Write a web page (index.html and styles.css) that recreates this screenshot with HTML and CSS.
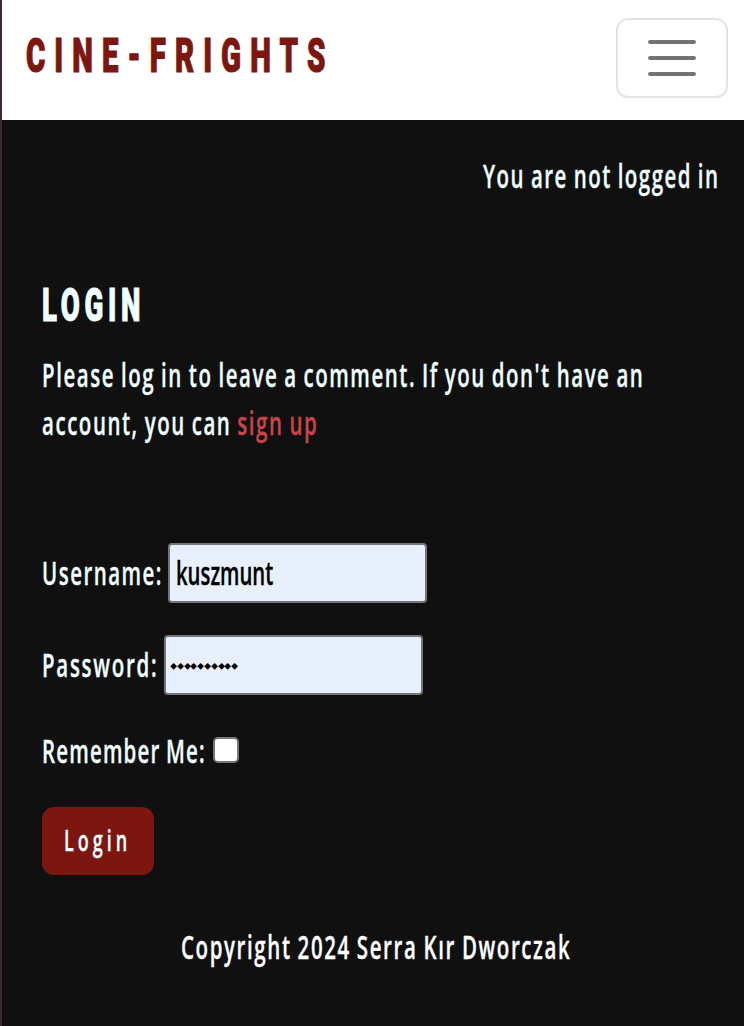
FILE: index.html
```
<!DOCTYPE html>
<html lang="en">
<head>
<meta charset="utf-8">
<title>Cine-Frights</title>
<link rel="stylesheet" href="styles.css">
</head>
<body>
<header class="navbar">
  <a class="brand" href="#"><span class="narrow">CINE-FRIGHTS</span></a>
  <button class="toggler" aria-label="Toggle navigation">
    <svg width="60" height="60" viewBox="0 0 30 30"><path d="M4 7h22M4 15h22M4 23h22" fill="none" stroke="#737373" stroke-width="2" stroke-linecap="round" stroke-miterlimit="10"/></svg>
  </button>
</header>
<p class="status"><span class="narrow">You are not logged in</span></p>
<main class="content">
  <h1 class="title"><span class="narrow">LOGIN</span></h1>
  <p class="intro"><span class="line lead"><span class="narrow">Please log in to leave a comment. If you don't have an</span></span><span class="line"><span class="narrow">account, you can <a class="signup" href="#">sign up</a></span></span></p>
  <form class="form">
    <div class="row"><label class="label user-label"><span class="narrow">Username:</span></label><div class="field"><span class="narrow">kuszmunt</span></div></div>
    <div class="row"><label class="label pass-label"><span class="narrow">Password:</span></label><div class="field dots"><span>⬩⬩⬩⬩⬩⬩⬩⬩⬩⬩</span></div></div>
    <div class="remember"><label class="label remember-label"><span class="narrow">Remember Me:</span></label><span class="check"></span></div>
    <button class="submit" type="button"><span class="narrow">Login</span></button>
  </form>
</main>
<footer class="footer"><span class="narrow">Copyright 2024 Serra Kır Dworczak</span></footer>
</body>
</html>
```
FILE: styles.css
```
* { box-sizing: border-box; }
body {
  margin: 0;
  height: 1026px;
  overflow: hidden;
  border-left: 2px solid #3d2c2d;
  background: #101010;
  color: azure;
  font: 600 33px/48px "Open Sans", sans-serif;
}
p, h1 { margin: 0; }
a { color: inherit; text-decoration: none; }
.narrow {
  display: inline-block;
  white-space: nowrap;
  transform: scaleX(.62);
  transform-origin: left center;
  letter-spacing: 2.4px;
  word-spacing: -1.5px;
  -webkit-text-stroke: .35px currentColor;
}
.navbar {
  height: 120px;
  padding: 18px 16px 0 24px;
  display: flex;
  justify-content: space-between;
  background: #fff;
}
.brand {
  width: 310px;
  padding-top: 14px;
  color: #7b1710;
  font-family: Roboto, sans-serif;
  font-size: 49px;
  font-weight: 900;
}
.brand .narrow { transform: scaleX(.6); letter-spacing: 15.1px; -webkit-text-stroke: 1.2px #7b1710; }
.toggler {
  width: 112px;
  height: 80px;
  padding: 8px 24px;
  border: 2px solid #e4e4e4;
  border-radius: 12px;
  background: #fff;
}
.toggler svg { display: block; }
.status { height: 80px; padding: 32px 0 0 481px; overflow: hidden; }
.content { padding: 80px 0 0 40px; }
.title { height: 71px; line-height: 50px; font-family: Roboto, sans-serif; font-size: 46px; font-weight: 900; }
.title .narrow { transform: scaleX(.6); letter-spacing: 7.8px; -webkit-text-stroke: 1px azure; }
.line { display: block; height: 48px; overflow: hidden; }
.lead .narrow { letter-spacing: 2.5px; }
.line .narrow { letter-spacing: 2.5px; }
.signup { color: #cb444a; }
.form { padding-top: 96px; }
.row { display: flex; height: 60px; margin-bottom: 32px; align-items: center; }
.label { display: block; white-space: nowrap; }
.user-label { width: 126px; }
.pass-label { width: 122px; }
.pass-label .narrow { letter-spacing: 2.8px; }
.remember-label { width: 171px; }
.remember-label .narrow { letter-spacing: 1.9px; }
.field {
  width: 259px;
  height: 60px;
  padding: 4px 6px;
  border: 2px solid #767676;
  border-radius: 4px;
  background: #e8f0fe;
  color: #000;
}
.field .narrow { transform: scaleX(.615); letter-spacing: 0; }
.dots { padding: 5px 0 0 4px; font: 20px/46px "DejaVu Sans", sans-serif; letter-spacing: -.2px; }
.remember { display: flex; height: 48px; margin-bottom: 32px; }
.check { width: 26px; height: 26px; margin-top: 10px; border: 2px solid #767676; border-radius: 5px; background: #fff; }
.submit {
  display: block;
  width: 112px;
  height: 68px;
  padding: 0 0 2px 22px;
  border: 0;
  border-radius: 12px;
  background: #7b1710;
  color: azure;
  font: 600 29px/66px "Open Sans", sans-serif;
  text-align: left;
}
.submit .narrow { letter-spacing: 6.5px; }
.footer { padding: 48px 0 0 179px; color: #fff; overflow: hidden; }
.footer .narrow { letter-spacing: 2.6px; }
```
